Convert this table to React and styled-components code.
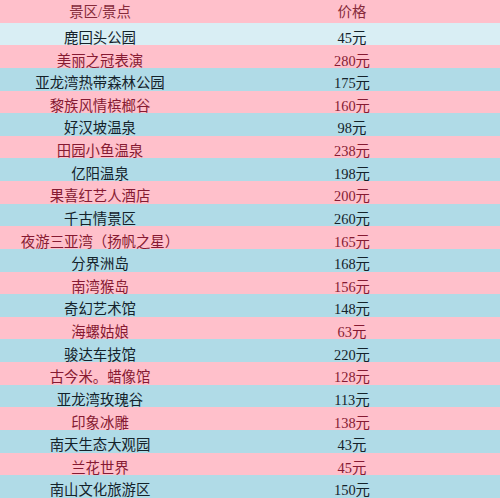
import React from "react";
import styled, { createGlobalStyle } from "styled-components";

const Global = createGlobalStyle`
  html, body { margin: 0; padding: 0; background: #ffffff; }
  body { width: 500px; height: 498px; overflow: hidden; }
`;

const ROW_H = 498 / 22;

const Table = styled.div`
  width: 500px;
  display: grid;
  grid-template-columns: 200px 304px;
  grid-auto-rows: ${ROW_H}px;
  font-family: "Liberation Serif", "Noto Sans CJK SC", serif;
  font-size: 14.4px;
  overflow: hidden;
`;

const Cell = styled.div`
  box-sizing: border-box;
  display: flex;
  align-items: center;
  justify-content: center;
  white-space: nowrap;
  padding-top: ${(p) => (p.$head ? 1 : 8.5)}px;
  line-height: 1;
  background: ${(p) =>
    p.$tone === "pink" ? "#ffc0cb" : p.$tone === "pale" ? "#d9eef4" : "#b0dbe7"};
  color: ${(p) =>
    p.$head ? "#862a3a" : p.$tone === "pink" ? "#861a32" : "#14222a"};
`;

const rows = [
  ["鹿回头公园", "45元"],
  ["美丽之冠表演", "280元"],
  ["亚龙湾热带森林公园", "175元"],
  ["黎族风情槟榔谷", "160元"],
  ["好汉坡温泉", "98元"],
  ["田园小鱼温泉", "238元"],
  ["亿阳温泉", "198元"],
  ["果喜红艺人酒店", "200元"],
  ["千古情景区", "260元"],
  ["夜游三亚湾（扬帆之星）", "165元"],
  ["分界洲岛", "168元"],
  ["南湾猴岛", "156元"],
  ["奇幻艺术馆", "148元"],
  ["海螺姑娘", "63元"],
  ["骏达车技馆", "220元"],
  ["古今米。蜡像馆", "128元"],
  ["亚龙湾玫瑰谷", "113元"],
  ["印象冰雕", "138元"],
  ["南天生态大观园", "43元"],
  ["兰花世界", "45元"],
  ["南山文化旅游区", "150元"],
];

export default function App() {
  return (
    <>
      <Global />
      <Table>
        <Cell $head $tone="pink">景区/景点</Cell>
        <Cell $head $tone="pink">价格</Cell>
        {rows.map(([name, price], i) => {
          const tone = i === 0 ? "pale" : i % 2 === 1 ? "pink" : "blue";
          return (
            <React.Fragment key={name}>
              <Cell $tone={tone}>{name}</Cell>
              <Cell $tone={tone}>{price}</Cell>
            </React.Fragment>
          );
        })}
      </Table>
    </>
  );
}
